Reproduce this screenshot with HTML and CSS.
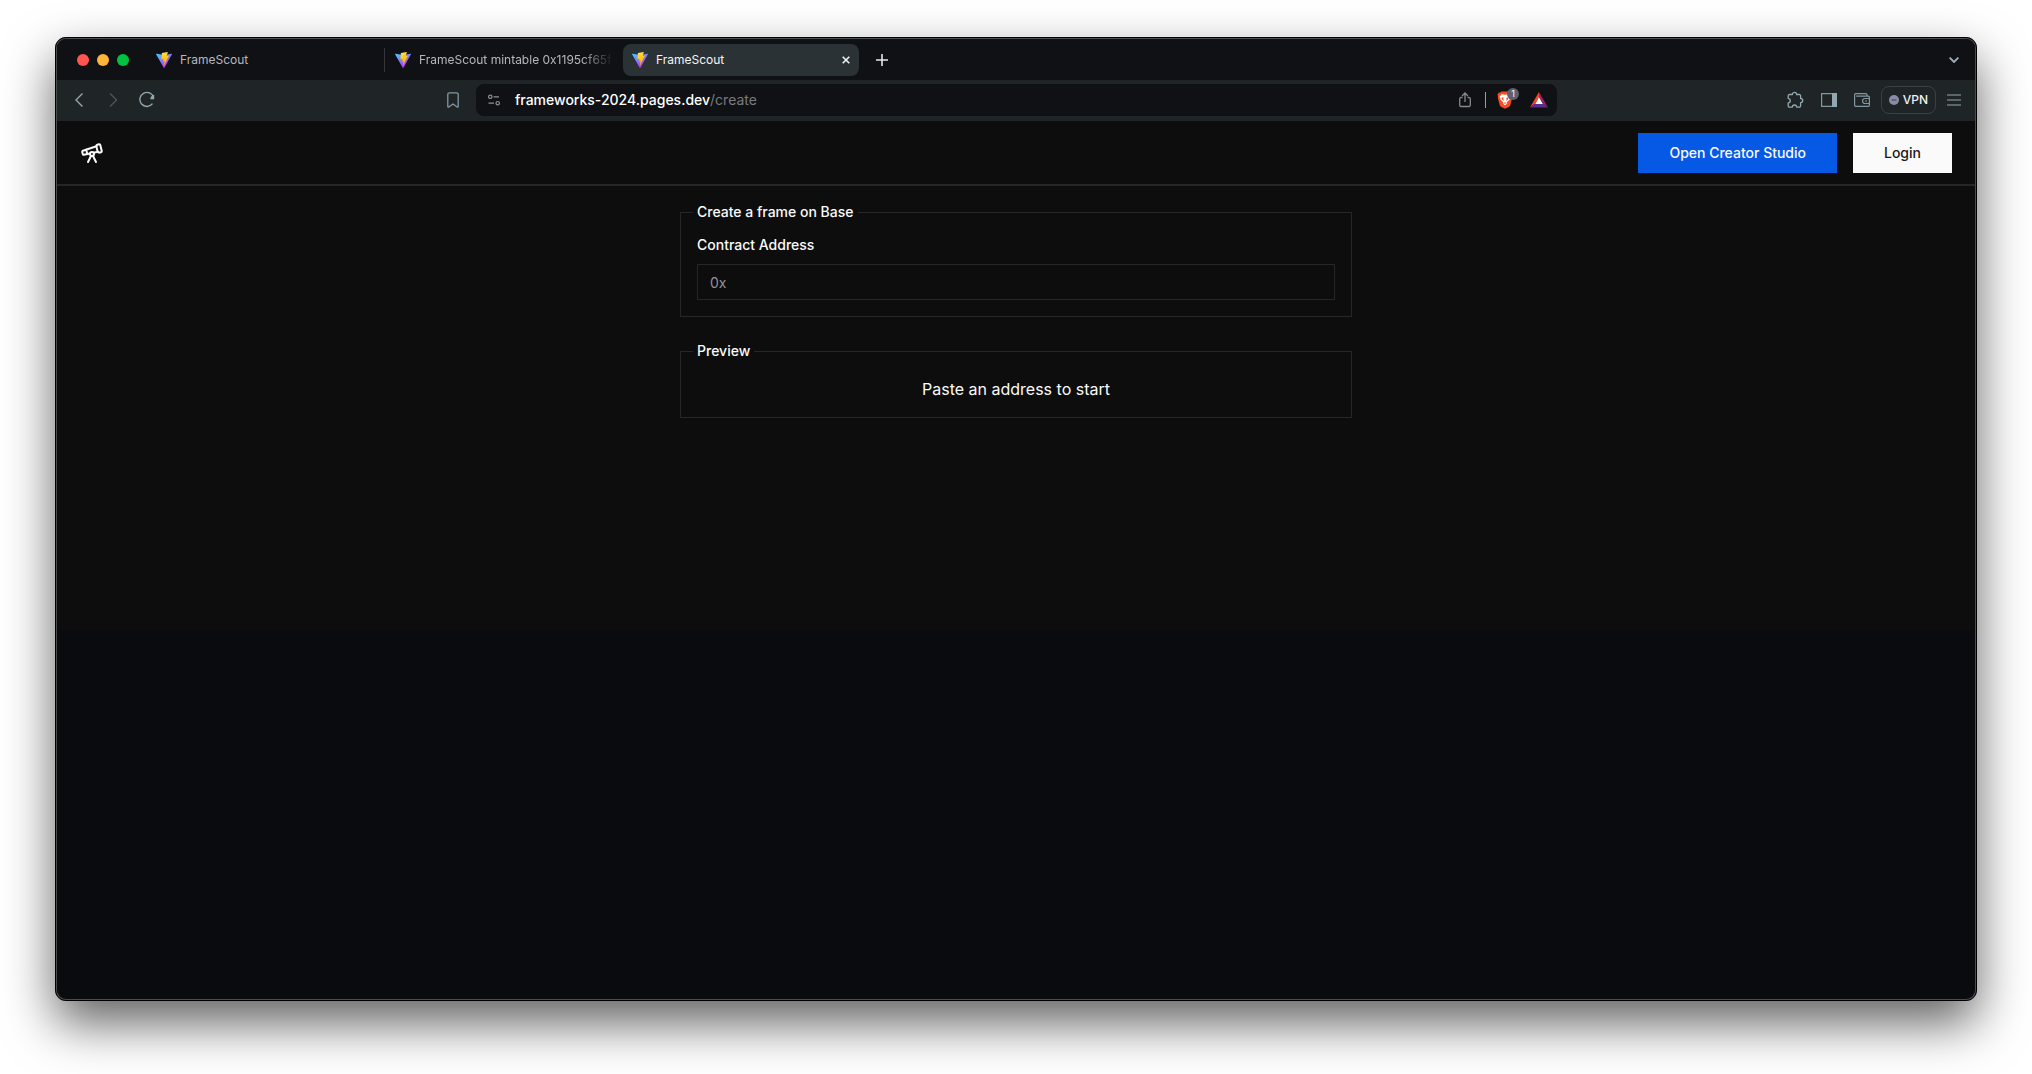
FILE: index.html
```html
<!DOCTYPE html>
<html lang="en">
<head>
<meta charset="utf-8">
<title>FrameScout</title>
<link rel="stylesheet" href="styles.css">
</head>
<body>
<svg class="defs" aria-hidden="true">
  <defs>
    <linearGradient id="vite-blue" x1="0" y1="0" x2="0.6" y2="0.9"><stop offset="0" stop-color="#41d1ff"/><stop offset="1" stop-color="#bd34fe"/></linearGradient>
    <linearGradient id="vite-gold" x1="0.4" y1="0" x2="0.6" y2="0.9"><stop offset="0" stop-color="#ffea83"/><stop offset="0.1" stop-color="#ffdd35"/><stop offset="1" stop-color="#ffa800"/></linearGradient>
  </defs>
  <symbol id="vite" viewBox="0 0 256 257">
    <path fill="url(#vite-blue)" d="M255.153 37.938L134.897 252.976c-2.483 4.44-8.862 4.466-11.382.048L.875 37.958c-2.746-4.814 1.371-10.646 6.827-9.67l120.385 21.517a6.537 6.537 0 0 0 2.322-.004l117.867-21.483c5.438-.991 9.574 4.796 6.877 9.62Z"/>
    <path fill="url(#vite-gold)" d="M185.432.063L96.44 17.501a3.268 3.268 0 0 0-2.634 3.014l-5.474 92.456a3.268 3.268 0 0 0 3.997 3.378l24.777-5.718c2.318-.535 4.413 1.507 3.936 3.838l-7.361 36.047c-.495 2.426 1.782 4.5 4.151 3.78l15.304-4.649c2.372-.72 4.652 1.36 4.15 3.788l-11.698 56.621c-.732 3.542 3.979 5.473 5.943 2.437l1.313-2.028l72.516-144.72c1.215-2.423-.88-5.186-3.54-4.672l-25.505 4.922c-2.396.462-4.435-1.77-3.759-4.114l16.646-57.705c.677-2.35-1.37-4.583-3.769-4.113Z"/>
  </symbol>
</svg>

<div class="window">
  <div class="tabbar">
    <div class="lights">
      <button class="light red" aria-label="Close window"></button>
      <button class="light amber" aria-label="Minimize"></button>
      <button class="light green" aria-label="Zoom"></button>
    </div>
    <div class="tabs">
      <button class="tab"><svg class="favicon"><use href="#vite"/></svg><span class="tab-title">FrameScout</span></button>
      <span class="tab-divider"></span>
      <button class="tab"><svg class="favicon"><use href="#vite"/></svg><span class="tab-title faded">FrameScout mintable 0x1195cf65f</span></button>
      <div class="tab active">
        <svg class="favicon"><use href="#vite"/></svg><span class="tab-title">FrameScout</span>
        <button class="icon-btn" aria-label="Close tab"><svg width="8" height="8" viewBox="0 0 8 8" fill="none" stroke="#f0f2f3" stroke-width="1.6"><path d="M.7.7l6.6 6.6M7.3.7L.7 7.3"/></svg></button>
      </div>
    </div>
    <button class="icon-btn new-tab" aria-label="New tab"><svg width="12" height="12" viewBox="0 0 12 12" fill="none" stroke="#e6e8ea" stroke-width="1.6"><path d="M6 0v12M0 6h12"/></svg></button>
    <button class="icon-btn tab-search" aria-label="Search tabs"><svg width="10" height="6" viewBox="0 0 10 6" fill="none" stroke="#9fb0b8" stroke-width="1.8"><path d="M.6.6L5 5 9.4.6"/></svg></button>
  </div>

  <div class="toolbar">
    <div class="nav">
      <button class="icon-btn nav-btn" aria-label="Back"><svg width="18" height="18" viewBox="0 0 18 18" fill="none" stroke="#93a7af" stroke-width="1.4"><path d="M12.5 2.5L6 9l6.500 6.500"/></svg></button>
      <button class="icon-btn nav-btn" aria-label="Forward"><svg width="18" height="18" viewBox="0 0 18 18" fill="none" stroke="#4c565b" stroke-width="1.400"><path d="M6 2.500L12.500 9 6 15.500"/></svg></button>
      <button class="icon-btn nav-btn" aria-label="Reload"><svg width="18" height="18" viewBox="0 0 18 18" fill="none" stroke="#93a7af" stroke-width="1.400"><path d="M14.500 12.600A7 7 0 1 1 15.600 6.500"/><path d="M16.200 3.800v4.400h-4a5 5 0 0 1 4-4.400z" fill="#93a7af" stroke="none"/></svg></button>
    </div>
    <div class="address-area">
      <button class="icon-btn" aria-label="Bookmark"><svg width="12" height="16" viewBox="0 0 12 16" fill="none" stroke="#8298a1" stroke-width="1.300" stroke-linejoin="round"><path d="M.8 14.500V2.500A1.700 1.700 0 0 1 2.500.8h7a1.700 1.700 0 0 1 1.700 1.700v12c0 .6-.6.9-1 .5L6 12 1.800 15c-.4.400-1 .100-1-.5z"/></svg></button>
      <div class="address">
        <button class="icon-btn" aria-label="Site settings"><svg width="12" height="12" viewBox="0 0 12 12" fill="none" stroke="#8c8f94" stroke-width="1.200"><circle cx="2.300" cy="2.800" r="1.700"/><path d="M5.500 2.800H11M.5 9.200H6"/><circle cx="9.700" cy="9.200" r="1.700"/></svg></button>
        <div class="url" role="textbox" contenteditable="true" spellcheck="false" aria-label="Address"><span class="host">frameworks-2024.pages.dev</span>/create</div>
        <button class="icon-btn" aria-label="Share"><svg width="12" height="16" viewBox="0 0 12 16" fill="none" stroke="#85888d" stroke-width="1.300"><path d="M3.500 5.500H2A1.300 1.300 0 0 0 .7 6.800v6.400A1.300 1.300 0 0 0 2 14.500h8a1.300 1.300 0 0 0 1.300-1.300V6.800A1.300 1.300 0 0 0 10 5.500H8.500M6 10V1.200M3 4l3-3 3 3"/></svg></button>
        <span class="address-divider"></span>
        <button class="icon-btn shield" aria-label="Shields">
          <svg width="16" height="18" viewBox="0 0 16 18"><path fill="#fb4b22" d="M4.500.5h7l1.400 1.300 1.300-.2 1.300 2-.5 1.900.300 1-2 7.500c-.3 1-.9 1.500-1.600 2L8 17.800 4.300 16c-.7-.5-1.300-1-1.600-2l-2-7.500.300-1-.5-1.900 1.300-2 1.300.2z"/><path fill="#fff" d="M4.500 3.200L8 3.700l3.500-.5 2 2.600-1 1.400.200 1.300-2 2.100-1 1 .200 1.200L8 14.300l-1.900-1.500.200-1.200-1-1-2-2.100.200-1.300-1-1.400z"/><path fill="#fb4b22" d="M4.800 6.200l2 .6-.5 1.400 1 1.600-1.700-.8-.9-1.300zM11.200 6.200l-2 .6.500 1.400-1 1.600 1.700-.8.900-1.300zM6.900 11.900L8 11.300l1.100.6L8 12.900z"/></svg>
          <span class="badge">1</span>
        </button>
        <button class="icon-btn" aria-label="Rewards"><svg width="18" height="16" viewBox="0 0 18 16"><path fill="#ff4724" d="M9 0v5.500l-4 6L0 15.500z"/><path fill="#9e1f63" d="M9 0l9 15.500-5-4-4-6z"/><path fill="#5c2d91" d="M0 15.500l5-4h8l5 4z"/><path fill="#fff" d="M9 5.200l3.800 6.800H5.200z"/></svg></button>
      </div>
    </div>
    <div class="tools">
      <button class="icon-btn" aria-label="Extensions"><svg width="18" height="18" viewBox="0 0 18 18" fill="none" stroke="#93a7af" stroke-width="1.300" stroke-linejoin="round"><path d="M2.200 4.800a1.300 1.300 0 0 1 1.300-1.300h2.900a2.100 2.100 0 1 1 4.200 0h2.700a1.300 1.300 0 0 1 1.300 1.300v2.700a2.100 2.100 0 1 1 0 4.200v3.100a1.300 1.300 0 0 1-1.300 1.300h-2.700a2 2 0 0 0-4.200 0H3.500a1.300 1.300 0 0 1-1.300-1.300v-3a2.100 2.100 0 0 0 0-4.200z"/></svg></button>
      <button class="icon-btn" aria-label="Sidebar"><svg width="16" height="14" viewBox="0 0 16 14"><path d="M.6.600h14.800v12.800H.6z" fill="none" stroke="#8298a1" stroke-width="1.200"/><path fill="#93a7af" d="M11 0h5v14h-5z"/></svg></button>
      <button class="icon-btn" aria-label="Wallet"><svg width="16" height="14" viewBox="0 0 16 14" fill="none" stroke="#8298a1" stroke-width="1.200"><path d="M13 3.200V1.800c0-.7-.5-1.200-1.200-1.200H1.800C1.100.6.600 1.100.6 1.900v10.200c0 .8.500 1.300 1.200 1.300h12.400c.7 0 1.200-.5 1.200-1.200V4.400c0-.7-.5-1.200-1.200-1.200H2.200M15.400 5.500H11a2.200 2.200 0 0 0 0 5h4.400M11 8h2"/></svg></button>
      <button class="vpn"><svg width="10" height="10" viewBox="0 0 10 10"><circle cx="5" cy="5" r="5" fill="#8b8ba7"/><path d="M2.500 5h5" stroke="#3b3d4b" stroke-width="1.200"/></svg>VPN</button>
      <button class="icon-btn" aria-label="Menu"><svg width="14" height="12" viewBox="0 0 14 12" fill="none" stroke="#93a7af" stroke-width="1.200"><path d="M0 1h14M0 6h14M0 11h14"/></svg></button>
    </div>
  </div>

  <div class="page">
    <header class="site-header">
      <a href="#" class="logo" aria-label="FrameScout home"><svg width="24" height="24" viewBox="0 0 24 24" fill="none" stroke="#fafafa" stroke-width="2" stroke-linecap="round" stroke-linejoin="round"><path d="m10.065 12.493-6.180 1.318a.934.934 0 0 1-1.108-.702l-.537-2.150a1.070 1.070 0 0 1 .691-1.265l13.504-4.440"/><path d="m13.560 11.747 4.332-.924"/><path d="m16 21-3.105-6.210"/><path d="M16.485 5.940a2 2 0 0 1 1.455-2.425l1.090-.272a1 1 0 0 1 1.212.727l1.515 6.060a1 1 0 0 1-.727 1.213l-1.090.272a2 2 0 0 1-2.425-1.455z"/><path d="m6.158 8.633 1.114 4.456"/><path d="m8 21 3.105-6.210"/><circle cx="12" cy="13" r="2"/></svg></a>
      <div class="actions">
        <button class="btn primary">Open Creator Studio</button>
        <button class="btn light-btn">Login</button>
      </div>
    </header>
    <main class="create">
      <fieldset class="panel">
        <legend>Create a frame on Base</legend>
        <label for="contract">Contract Address</label>
        <input id="contract" type="text" placeholder="0x">
      </fieldset>
      <fieldset class="panel">
        <legend>Preview</legend>
        <p class="hint">Paste an address to start</p>
      </fieldset>
    </main>
  </div>
</div>
</body>
</html>
```
FILE: styles.css
```css
* { box-sizing: border-box; }

body {
  margin: 0;
  min-height: 100vh;
  padding: 37px 55px 73px;
  background: #fff;
  font-family: Inter, "Liberation Sans", sans-serif;
  font-size: 14px;
  line-height: 20px;
  color: #fafafa;
  display: flex;
}

button {
  font: inherit;
  color: inherit;
  border: 0;
  padding: 0;
  background: none;
}

svg { display: block; flex: none; }

.defs { position: absolute; width: 0; height: 0; }

.window {
  flex: 1;
  min-width: 0;
  display: flex;
  flex-direction: column;
  overflow: hidden;
  background: #0a0b0e;
  border: 2px solid #4a4d4f;
  outline: 1px solid #000;
  outline-offset: -1px;
  border-radius: 11px;
  box-shadow: 0 22px 50px rgba(0, 0, 0, 0.62);
}

.icon-btn {
  display: flex;
  align-items: center;
  justify-content: center;
  flex: none;
}

/* Tab strip */
.tabbar {
  display: flex;
  align-items: center;
  height: 41px;
  padding: 0 16px 0 20px;
  background: #101115;
}

.lights { display: flex; gap: 8px; margin-right: 18px; }
.light { width: 12px; height: 12px; border-radius: 50%; }
.red { background: #ff5450; }
.amber { background: #ffb43a; }
.green { background: #00c342; }

.tabs { display: flex; align-items: center; gap: 1px; flex: 0 1 712px; min-width: 0; }

.tab {
  flex: 1;
  min-width: 0;
  height: 32px;
  padding: 0 9px;
  display: flex;
  align-items: center;
  gap: 8px;
  font-size: 12px;
  text-align: left;
  color: #b5b7ba;
}

.tab.active {
  background: #2a3235;
  border-radius: 8px;
  color: #f4f5f6;
}

.favicon { width: 16px; height: 16px; }
.tab-title { flex: 1; min-width: 0; overflow: hidden; white-space: nowrap; }
.faded { mask-image: linear-gradient(to right, #000 84%, transparent); }
.tab-divider { width: 1px; height: 24px; background: #34363a; }
.new-tab { width: 32px; height: 32px; margin-left: 7px; }
.tab-search { width: 10px; height: 32px; margin-left: auto; }

/* Navigation bar */
.toolbar {
  display: grid;
  grid-template-columns: 377fr 1110fr 404fr;
  align-items: center;
  height: 41px;
  padding: 0 14px 2px 13px;
  background: #1f2427;
}

.nav { display: flex; gap: 16px; }
.nav-btn { width: 18px; height: 28px; }

.address-area { display: flex; align-items: center; gap: 17px; min-width: 0; }

.address {
  flex: 1;
  min-width: 0;
  height: 32px;
  display: flex;
  align-items: center;
  padding: 0 9px 0 12px;
  background: #101115;
  border-radius: 8px;
}

.url {
  flex: 1;
  min-width: 0;
  margin-left: 15px;
  overflow: hidden;
  white-space: nowrap;
  color: #777a7f;
}

.host { color: #fff; font-weight: 500; }
.address-divider { width: 1px; height: 16px; margin: 0 11px 0 14px; background: #9a9ca0; }
.shield { position: relative; margin-right: 17px; }

.badge {
  position: absolute;
  left: 10px;
  top: -3px;
  width: 12px;
  height: 12px;
  border-radius: 50%;
  background: #5e6070;
  color: #fff;
  font-size: 9px;
  line-height: 12px;
  text-align: center;
}

.tools { display: flex; align-items: center; justify-content: flex-end; gap: 17px; }

.vpn {
  display: flex;
  align-items: center;
  gap: 4px;
  height: 28px;
  padding: 0 7px;
  margin: 0 -6px;
  border: 1px solid #394044;
  border-radius: 8px;
  font-size: 12px;
  font-weight: 500;
  color: #f0f1f2;
}

/* Site */
.page {
  min-height: 509px;
  background: #0d0d0d;
}

.site-header {
  display: flex;
  align-items: center;
  justify-content: space-between;
  height: 65px;
  padding: 0 23px;
  border-bottom: 2px solid #262626;
}

.actions { display: flex; gap: 16px; }

.btn {
  height: 40px;
  padding: 0 31px;
  font-weight: 500;
}

.primary { background: #0559e5; color: #fafafa; }
.light-btn { background: #fafafa; color: #18181b; }

.create {
  display: flex;
  flex-direction: column;
  gap: 24px;
  max-width: 672px;
  margin: 0 auto;
  padding: 16px 0;
}

.panel {
  display: flex;
  flex-direction: column;
  gap: 12px;
  min-width: 0;
  margin: 0;
  padding: 16px;
  border: 1px solid #262626;
}

.panel legend {
  margin-left: -4px;
  padding: 0 4px;
  font-weight: 500;
}

.panel label { font-weight: 500; line-height: 14px; }

.panel input {
  width: 100%;
  height: 36px;
  padding: 0 12px;
  border: 1px solid #262626;
  background: transparent;
  color: #fafafa;
  font: inherit;
}

.panel input::placeholder { color: #92929a; }

.hint {
  margin: 0;
  text-align: center;
  font-size: 16px;
  line-height: 24px;
}
```
